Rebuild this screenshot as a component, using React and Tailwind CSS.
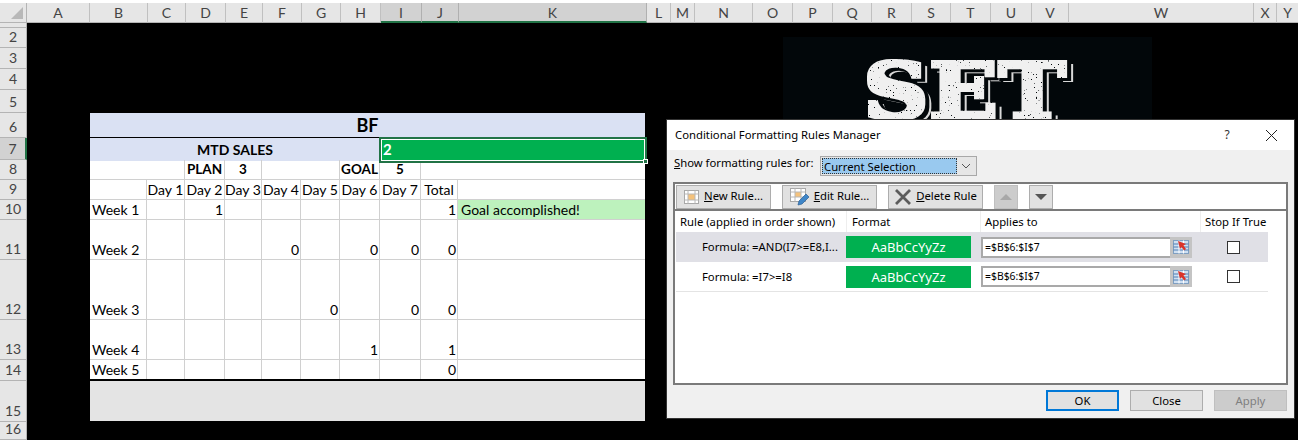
import React from 'react';

const COLUMNS = [
  ['A', 63], ['B', 58], ['C', 38], ['D', 40], ['E', 37], ['F', 39], ['G', 39], ['H', 40], ['I', 41], ['J', 37], ['K', 188],
  ['L', 24], ['M', 24], ['N', 58], ['O', 40], ['P', 40], ['Q', 39], ['R', 40], ['S', 39], ['T', 40], ['U', 41], ['V', 37],
  ['W', 185], ['X', 23], ['Y', 22],
];

const ROW_HEADERS = [
  ['', 5], ['2', 20], ['3', 21], ['4', 21], ['5', 23], ['6', 25], ['7', 22], ['8', 20], ['9', 20], ['10', 20],
  ['11', 40], ['12', 60], ['13', 40], ['14', 21], ['15', 41], ['16', 18],
];

const WEEKS = [
  { name: 'Week 1', h: 'h-[20px]', vals: ['', '1', '', '', '', '', '', '1'] },
  { name: 'Week 2', h: 'h-[40px]', vals: ['', '', '', '0', '', '0', '0', '0'] },
  { name: 'Week 3', h: 'h-[60px]', vals: ['', '', '', '', '0', '', '0', '0'] },
  { name: 'Week 4', h: 'h-[40px]', vals: ['', '', '', '', '', '1', '', '1'] },
  { name: 'Week 5', h: 'h-[21px]', vals: ['', '', '', '', '', '', '', '0'] },
];

const GRID = 'grid grid-cols-[57px_38px_40px_37px_39px_39px_40px_41px_37px_187px]';
const CELL = 'flex items-end border-r border-b border-[#d0d0d0] px-[2px] leading-[19px] overflow-hidden whitespace-nowrap';

function ColumnHeader() {
  return (
    <div className="flex h-[23px] pt-[3px] bg-white text-[14px] text-[#444]">
      <div className="w-[27px] shrink-0 bg-[#e6e6e6] border-r border-b border-[#b4b4b4] relative">
        <div className="absolute right-[3px] bottom-[3px] w-0 h-0 border-l-[12px] border-l-transparent border-b-[12px] border-b-[#b8b8b8]" />
      </div>
      {COLUMNS.map(([name, w]) => {
        const on = name === 'I' || name === 'J' || name === 'K';
        return (
          <div
            key={name}
            style={{ width: w }}
            className={`shrink-0 flex items-center justify-center border-r ${on ? 'bg-[#d2d2d2] border-[#b0b0b0] border-b-2 border-b-[#217346]' : 'bg-[#e6e6e6] border-[#c0c0c0] border-b border-b-[#b4b4b4]'}`}
          >
            {name}
          </div>
        );
      })}
    </div>
  );
}

function RowHeader() {
  return (
    <div className="w-[27px] shrink-0 flex flex-col text-[14px] text-[#444]">
      {ROW_HEADERS.map(([name, h]) => (
        <div
          key={h + name}
          style={{ height: h }}
          className={`flex items-end justify-center leading-[20px] border-b border-b-[#b4b4b4] border-r ${name === '7' ? 'bg-[#d2d2d2] border-r-2 border-r-[#217346]' : 'bg-[#e6e6e6] border-r-[#b4b4b4]'}`}
        >
          {name}
        </div>
      ))}
    </div>
  );
}

function SalesTable() {
  return (
    <div className="ml-[63px] mt-[90px] w-[555px] self-start bg-white text-[14px] text-black font-['Lato',sans-serif]">
      <div className="h-[25px] bg-[#dae1f3] border-b border-black flex items-center justify-center text-[18px] font-bold">BF</div>
      <div className={`${GRID} h-[22px] border-b border-black font-bold`}>
        <div className="col-span-7 bg-[#dae1f3] flex items-center justify-center">MTD SALES</div>
        <div className="col-span-3 relative bg-[#00b050] text-white flex items-center pl-[3px] text-[15px]">
          2
          <div className="absolute -left-[1px] -right-[2px] -top-[1px] -bottom-[2px] border-2 border-[#217346] outline outline-white -outline-offset-3" />
          <div className="absolute -right-[3px] -bottom-[3px] w-[5px] h-[5px] bg-[#217346] border border-white" />
        </div>
      </div>
      <div className={`${GRID} h-[20px] font-bold text-[13.5px]`}>
        <div className={`${CELL} col-span-2`} />
        <div className={`${CELL} justify-center`}>PLAN</div>
        <div className={`${CELL} justify-center`}>3</div>
        <div className={`${CELL} col-span-2`} />
        <div className={`${CELL} justify-center`}>GOAL</div>
        <div className={`${CELL} justify-center`}>5</div>
        <div className={`${CELL} col-span-2 border-r-0`} />
      </div>
      <div className={`${GRID} h-[20px]`}>
        <div className={CELL} />
        {['Day 1', 'Day 2', 'Day 3', 'Day 4', 'Day 5', 'Day 6', 'Day 7', 'Total'].map(d => (
          <div key={d} className={`${CELL} justify-center px-0`}>{d}</div>
        ))}
        <div className={`${CELL} border-r-0`} />
      </div>
      {WEEKS.map((w, i) => (
        <div key={w.name} className={`${GRID} ${w.h} ${i === 4 ? 'border-b-2 border-black' : ''}`}>
          <div className={`${CELL} ${i === 4 ? 'border-b-0' : ''}`}>{w.name}</div>
          {w.vals.map((v, j) => (
            <div key={j} className={`${CELL} justify-end pr-[1px] ${i === 4 ? 'border-b-0' : ''}`}>{v}</div>
          ))}
          {i === 0 ? (
            <div className="flex items-end bg-[#bdf2bd] px-[3px] leading-[19px] border-b border-[#d0d0d0]">Goal accomplished!</div>
          ) : (
            <div className={`${CELL} border-r-0 ${i === 4 ? 'border-b-0' : ''}`} />
          )}
        </div>
      ))}
      <div className="h-[40px] bg-[#e4e4e4]" />
    </div>
  );
}

function SetPicture() {
  return (
    <svg className="absolute left-[783px] top-[37px]" width="369" height="83" viewBox="0 0 369 83">
      <defs>
        <filter id="worn" x="-10%" y="-10%" width="120%" height="120%" colorInterpolationFilters="sRGB">
          <feMorphology in="SourceAlpha" operator="dilate" radius="1.6" result="fat" />
          {/* thin offset outline behind the letters */}
          <feOffset in="fat" dx="6" dy="4" result="backShape" />
          <feFlood floodColor="#d8d8d8" />
          <feComposite in2="backShape" operator="in" result="back" />
          <feMorphology in="fat" operator="dilate" radius="1" result="fatter" />
          <feOffset in="fatter" dx="3" dy="2" result="gapShape" />
          <feFlood floodColor="#02070a" />
          <feComposite in2="gapShape" operator="in" result="gap" />
          {/* speckled face */}
          <feTurbulence type="fractalNoise" baseFrequency="0.6" numOctaves="2" seed="4" result="noise" />
          <feColorMatrix in="noise" type="matrix" values="0 0 0 0 0  0 0 0 0 0  0 0 0 0 0  0 0 0 -14 11" result="spots" />
          <feFlood floodColor="#f0f0f0" />
          <feComposite in2="fat" operator="in" />
          <feComposite in2="spots" operator="in" result="face" />
          <feMerge>
            <feMergeNode in="back" />
            <feMergeNode in="gap" />
            <feMergeNode in="face" />
          </feMerge>
        </filter>
      </defs>
      <rect width="369" height="83" fill="#02070a" />
      <text
        x="80"
        y="81"
        textLength="203"
        lengthAdjust="spacingAndGlyphs"
        fontFamily="'DejaVu Serif', serif"
        fontWeight="700"
        fontSize="76"
        fill="#fff"
        filter="url(#worn)"
      >
        SET
      </text>
    </svg>
  );
}

function NewRuleIcon() {
  return (
    <svg width="16" height="16" viewBox="0 0 16 16">
      <rect x="0.5" y="1.5" width="14" height="13" fill="#fff" stroke="#a8a8a8" />
      <rect x="4" y="5" width="7" height="6" fill="#f4c27c" />
      <path d="M0.5 5h14M0.5 11h14M4 1.5v13M11 1.5v13" stroke="#b8b8b8" fill="none" />
    </svg>
  );
}

function EditRuleIcon() {
  return (
    <svg width="20" height="20" viewBox="0 0 20 20">
      <rect x="0.5" y="1.5" width="15" height="13" fill="#fff" stroke="#a8a8a8" />
      <rect x="5" y="5" width="6" height="5" fill="#f4c27c" />
      <path d="M0.5 5h15M0.5 10h15M5 1.5v13M11 1.5v13" stroke="#b8b8b8" fill="none" />
      <path d="M8 18l1-4 7-7 3 3-7 7z" fill="#3f86c8" stroke="#2a5f95" strokeWidth="0.7" />
    </svg>
  );
}

function DeleteIcon() {
  return (
    <svg width="18" height="18" viewBox="0 0 18 18">
      <path d="M2 2l14 14M16 2L2 16" stroke="#5c5c5c" strokeWidth="2.8" fill="none" />
    </svg>
  );
}

function PickerIcon() {
  return (
    <svg width="16" height="16" viewBox="0 0 16 16">
      <rect x="0.5" y="1.5" width="15" height="13" fill="#cfe0f2" stroke="#7f9fc2" />
      <path d="M0.5 5h15M0.5 8h15M0.5 11h15" stroke="#4f7fb5" fill="none" />
      <path d="M6 1.5v13M10.5 1.5v13" stroke="#fff" fill="none" />
      <path d="M5 2l8 3-2.5 1.5L13 10l-2 1.5-2.5-3.5L7 10z" fill="#d9342b" />
    </svg>
  );
}

function ToolButton({ icon, hot, rest }) {
  return (
    <button className="w-[95px] h-[24px] flex items-center justify-center gap-[4px] bg-[#e1e1e1] border border-[#adadad]">
      {icon}
      <span><span className="underline">{hot}</span>{rest}</span>
    </button>
  );
}

function RuleRow({ formula, active }) {
  return (
    <div className={`grid grid-cols-[170px_134px_220px_68px] h-[30px] items-center ${active ? 'bg-[#e0e0e6]' : 'bg-white border-b border-[#e4e4e4]'}`}>
      <div className="pl-[26px] pt-[1px] whitespace-nowrap">{formula}</div>
      <div className="h-[22px] w-[125px] bg-[#00b050] text-white text-center leading-[22px] text-[13px]">AaBbCcYyZz</div>
      <div className="flex items-center h-[21px] ml-[1px] w-[211px]">
        <div className="flex-1 h-full bg-white border-2 border-r-0 border-[#a9a9a9] pl-[2px] leading-[16px] text-[10.4px]">=$B$6:$I$7</div>
        <div className="w-[22px] h-full bg-[#c4c4c4] flex items-center justify-center"><PickerIcon /></div>
      </div>
      <div className="flex justify-center pr-[2px]">
        <div className="w-[13px] h-[13px] bg-white border border-[#333]" />
      </div>
    </div>
  );
}

function RulesDialog() {
  return (
    <div className="absolute left-[667px] top-[120px] w-[627px] h-[298px] flex flex-col bg-[#f0f0f0] text-[11.3px] text-black font-['Noto_Sans',sans-serif] shadow-[0_0_0_1px_#333]">
      <div className="h-[30px] bg-white flex items-center pl-[8px]">
        <span className="flex-1">Conditional Formatting Rules Manager</span>
        <span className="w-[20px] text-center text-[12px] text-[#333] mr-[28px]">?</span>
        <svg className="mr-[16px]" width="13" height="13" viewBox="0 0 13 13">
          <path d="M1 1l11 11M12 1L1 12" stroke="#222" fill="none" />
        </svg>
      </div>
      <div className="flex items-center h-[32px] pl-[7px]">
        <span className="w-[146px] -mt-[5px] whitespace-nowrap"><span className="underline">S</span>how formatting rules for:</span>
        <div className="flex w-[157px] h-[20px] border border-[#a8a8a8] bg-[#e6e6e6] p-[1px]">
          <div className="flex-1 bg-[#99c9ef] border border-dotted border-[#333] leading-[15px] pl-[1px]">Current Selection</div>
          <div className="w-[18px] flex items-center justify-center">
            <svg width="10" height="6" viewBox="0 0 10 6"><path d="M1 1l4 4 4-4" stroke="#555" fill="none" /></svg>
          </div>
        </div>
      </div>
      <div className="mx-[6px] h-[203px] border-2 border-[#7a7a7a] bg-white flex flex-col">
        <div className="h-[27px] flex items-center gap-[11px] pl-[1px] border-b-2 border-[#7a7a7a]">
          <ToolButton icon={<NewRuleIcon />} hot="N" rest="ew Rule..." />
          <ToolButton icon={<EditRuleIcon />} hot="E" rest="dit Rule..." />
          <ToolButton icon={<DeleteIcon />} hot="D" rest="elete Rule" />
          <button className="w-[24px] h-[24px] bg-[#cccccc] border border-[#bfbfbf] flex items-center justify-center">
            <span className="w-0 h-0 border-x-[6px] border-x-transparent border-b-[6px] border-b-[#a8a8a8]" />
          </button>
          <button className="w-[24px] h-[24px] bg-[#e1e1e1] border border-[#adadad] flex items-center justify-center">
            <span className="w-0 h-0 border-x-[6px] border-x-transparent border-t-[6px] border-t-[#555]" />
          </button>
        </div>
        <div className="pl-[1px] pr-[18px]">
          <div className="grid grid-cols-[170px_134px_220px_68px] h-[21px] items-center">
            <div className="pl-[4px] pt-[1px] whitespace-nowrap">Rule (applied in order shown)</div>
            <div className="pl-[5px] pt-[1px] h-full flex items-center border-l border-[#eee]">Format</div>
            <div className="pl-[4px] pt-[1px] h-full flex items-center border-l border-[#eee]">Applies to</div>
            <div className="pl-[4px] pt-[1px] h-full flex items-center border-l border-[#eee] whitespace-nowrap">Stop If True</div>
          </div>
          <RuleRow formula="Formula: =AND(I7>=E8,I..." active />
          <RuleRow formula="Formula: =I7>=I8" />
        </div>
      </div>
      <div className="flex justify-end gap-[11px] pr-[7px] pt-[5px]">
        <button className="w-[73px] h-[21px] bg-[#e1e1e1] border-2 border-[#0078d7] leading-[16px]">OK</button>
        <button className="w-[73px] h-[21px] bg-[#e1e1e1] border border-[#adadad] leading-[18px]">Close</button>
        <button className="w-[73px] h-[21px] bg-[#cccccc] border border-[#bfbfbf] text-[#7f7f7f] leading-[18px]">Apply</button>
      </div>
    </div>
  );
}

export default function App() {
  return (
    <div className="relative w-[1298px] h-[440px] overflow-hidden bg-black font-['Lato',sans-serif]">
      <ColumnHeader />
      <div className="flex">
        <RowHeader />
        <SalesTable />
      </div>
      <SetPicture />
      <RulesDialog />
    </div>
  );
}
